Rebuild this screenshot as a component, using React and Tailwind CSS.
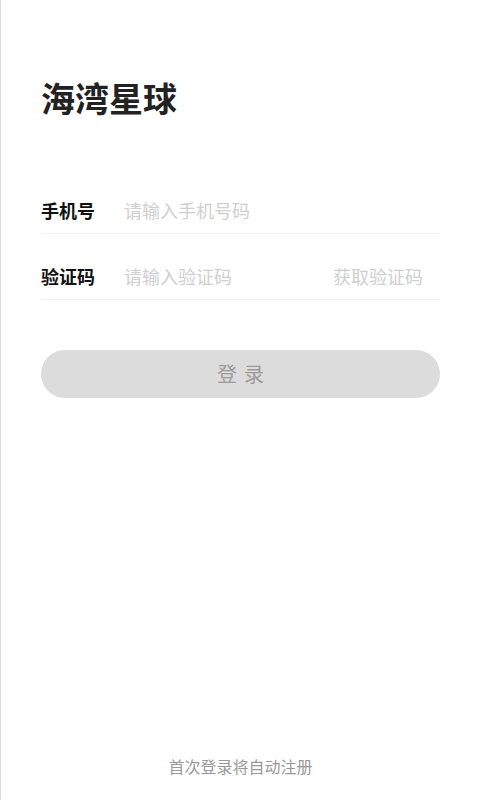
export default function App() {
  return (
    <div
      className="relative h-[800px] w-[480px] overflow-hidden border-l border-[#d9d9d9] bg-white px-10"
      style={{ fontFamily: '"Noto Sans CJK SC", "Noto Sans", sans-serif' }}
    >
      <h1 className="pt-[77px] text-[34px] font-bold leading-[42px] text-[#222]">海湾星球</h1>

      <div className="mt-[68px]">
        <div className="flex h-[47px] items-center border-b border-[#f0f0f0]">
          <span className="w-[83px] text-[18px] font-bold text-[#111]">手机号</span>
          <span className="text-[18px] text-[#cfcfcf]">请输入手机号码</span>
        </div>
        <div className="mt-5 flex h-[46px] items-center border-b border-[#f0f0f0]">
          <span className="w-[83px] text-[18px] font-bold text-[#111]">验证码</span>
          <span className="flex-1 text-[18px] text-[#cfcfcf]">请输入验证码</span>
          <span className="pr-[17px] text-[18px] text-[#cfcfcf]">获取验证码</span>
        </div>
      </div>

      <button className="mt-[50px] flex h-12 w-full items-center justify-center rounded-full bg-[#dcdcdc] text-[20px] tracking-[7px] text-[#9a9a9a]">
        <span className="pl-[7px]">登录</span>
      </button>

      <div className="absolute bottom-[22px] left-0 right-0 text-center text-[16px] text-[#999]">
        首次登录将自动注册
      </div>
    </div>
  );
}
